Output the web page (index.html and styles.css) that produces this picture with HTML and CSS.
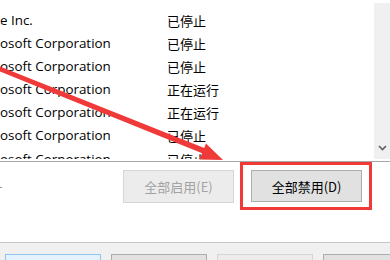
FILE: index.html
```html
<!DOCTYPE html>
<html lang="zh-CN">
<head>
    <meta charset="UTF-8">
    <title>服务</title>
    <link rel="stylesheet" href="styles.css">
</head>
<body>
    <div class="window">
        <div class="list">
            <div class="rows">
                <div class="row"><span class="name">e Inc.</span><span class="status">已停止</span></div>
                <div class="row"><span class="name">osoft Corporation</span><span class="status">已停止</span></div>
                <div class="row"><span class="name">osoft Corporation</span><span class="status">已停止</span></div>
                <div class="row"><span class="name">osoft Corporation</span><span class="status">正在运行</span></div>
                <div class="row"><span class="name">osoft Corporation</span><span class="status">正在运行</span></div>
                <div class="row"><span class="name">osoft Corporation</span><span class="status">已停止</span></div>
                <div class="row"><span class="name">osoft Corporation</span><span class="status">已停止</span></div>
            </div>
            <div class="scrollbar">
                <svg class="chevron" width="9" height="6" viewBox="0 0 9 6">
                    <path d="M1 1 L4.5 4.5 L8 1" fill="none" stroke="#606060" stroke-width="1.6"/>
                </svg>
            </div>
        </div>

        <div class="actions">
            <span class="mark"></span>
            <button class="btn" disabled>全部启用(E)</button>
            <button class="btn primary">全部禁用(D)</button>
        </div>

        <div class="footer">
            <button class="btn small focused"></button>
            <button class="btn small"></button>
            <button class="btn small" disabled></button>
            <button class="btn small"></button>
        </div>

        <!-- annotation overlay -->
        <div class="highlight"></div>
        <svg class="arrow" width="390" height="260" viewBox="0 0 390 260">
            <polygon points="0,66.5 0,71.5 204,154 205.5,148.5" fill="#f03a3a"/>
            <polygon points="223,160 199.5,159.5 206,143.5" fill="#f03a3a"/>
        </svg>
    </div>
</body>
</html>
```

FILE: styles.css
```css
body {
    margin: 0;
    background: #fff;
    font-family: "Noto Sans CJK SC", "Noto Sans", sans-serif;
    font-size: 13px;
    color: #000;
}

.window {
    position: relative;
    width: 390px;
    height: 260px;
    overflow: hidden;
}

/* service list */
.list {
    display: flex;
    align-items: flex-start;
    height: 161px;
    border-bottom: 1px solid #a8a8a8;
}

.rows {
    flex: 1;
    height: 159px;
    padding-top: 9px;
    box-sizing: border-box;
    overflow: hidden;
}

.row {
    display: flex;
    height: 23.1px;
    line-height: 23px;
    white-space: nowrap;
}

.name {
    width: 167px;
    font-family: "Open Sans", "Noto Sans CJK SC", sans-serif;
    font-size: 13.4px;
}

.scrollbar {
    width: 16px;
    height: 156px;
    margin-top: 3px;
    background: #f0f0f0;
    display: flex;
    align-items: flex-end;
    justify-content: center;
    padding-bottom: 8px;
    box-sizing: border-box;
}

/* buttons */
.actions {
    display: flex;
    justify-content: flex-end;
    align-items: flex-start;
    gap: 17px;
    height: 80px;
    padding: 8px 28px 0 0;
    box-sizing: border-box;
}

.mark {
    margin-right: auto;
    margin-top: 17px;
    width: 2px;
    height: 1px;
    background: #909090;
}

.btn {
    width: 111px;
    height: 33px;
    background: #e1e1e1;
    border: 1px solid #adadad;
    font-family: "Noto Sans CJK SC", sans-serif;
    font-size: 13px;
    color: #000;
    padding: 0;
}

.btn.primary {
    height: 32px;
}

.btn:disabled {
    background: #ececec;
    border-color: #d6d6d6;
    color: #a3a3a3;
}

.footer {
    display: flex;
    gap: 10px;
    height: 18px;
    padding: 11px 0 0 5px;
    background: #f0f0f0;
    border-top: 1px solid #c6c6c6;
    box-sizing: border-box;
}

.btn.small {
    width: 96px;
    flex-shrink: 0;
}

.btn.focused {
    border-color: #90c4f0;
    background: #e5f1fb;
}

/* red annotation */
.highlight {
    position: absolute;
    left: 240px;
    top: 162px;
    width: 126px;
    height: 42px;
    border: 3px solid #f03a3a;
}

.arrow {
    position: absolute;
    left: 0;
    top: 0;
}
```
